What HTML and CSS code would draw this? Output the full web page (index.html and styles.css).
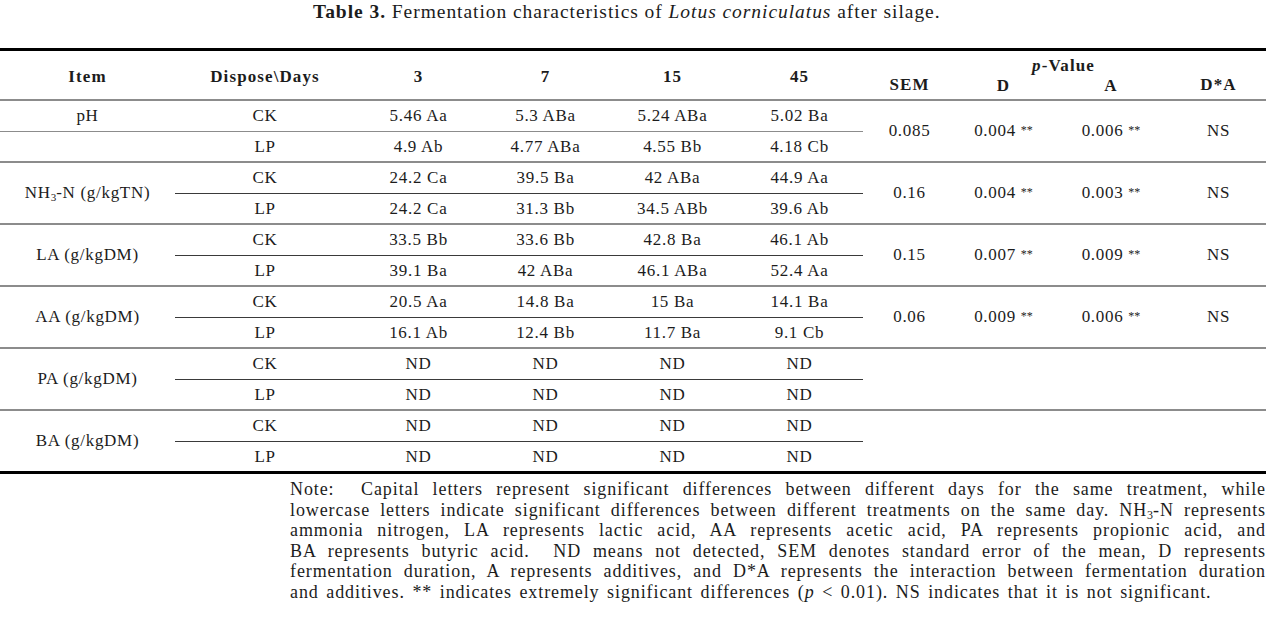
FILE: index.html
```html
<!DOCTYPE html>
<html lang="en">
<head>
<meta charset="utf-8">
<title>Table 3</title>
<link rel="stylesheet" href="styles.css">
</head>
<body>
<div class="title"><b>Table 3.</b> Fermentation characteristics of <i>Lotus corniculatus</i> after silage.</div>
<table class="data">
  <colgroup>
    <col class="c-item"><col class="c-disp"><col class="c-day"><col class="c-day"><col class="c-day"><col class="c-day">
    <col class="c-sem"><col class="c-d"><col class="c-a"><col class="c-da">
  </colgroup>
  <thead>
    <tr class="h1">
      <th rowspan="2" class="mid">Item</th>
      <th rowspan="2" class="mid">Dispose\Days</th>
      <th rowspan="2" class="mid">3</th>
      <th rowspan="2" class="mid">7</th>
      <th rowspan="2" class="mid">15</th>
      <th rowspan="2" class="mid">45</th>
      <th rowspan="2" class="low">SEM</th>
      <th colspan="2" class="pv"><i>p</i>-Value</th>
      <th rowspan="2" class="low">D*A</th>
    </tr>
    <tr class="h2">
      <th class="up">D</th>
      <th class="up">A</th>
    </tr>
  </thead>
  <tbody>
    <tr class="s1">
      <td class="m">pH</td><td class="m">CK</td><td class="m">5.46 Aa</td><td class="m">5.3 ABa</td><td class="m">5.24 ABa</td><td class="m">5.02 Ba</td>
      <td rowspan="2" class="g">0.085</td><td rowspan="2" class="g">0.004 <span class="st">**</span></td><td rowspan="2" class="g">0.006 <span class="st">**</span></td><td rowspan="2" class="g">NS</td>
    </tr>
    <tr class="s2">
      <td class="g"></td><td class="g">LP</td><td class="g">4.9 Ab</td><td class="g">4.77 ABa</td><td class="g">4.55 Bb</td><td class="g">4.18 Cb</td>
    </tr>

    <tr class="s1">
      <td rowspan="2" class="g">NH<sub>3</sub>-N (g/kgTN)</td><td class="d">CK</td><td class="d">24.2 Ca</td><td class="d">39.5 Ba</td><td class="d">42 ABa</td><td class="d">44.9 Aa</td>
      <td rowspan="2" class="g">0.16</td><td rowspan="2" class="g">0.004 <span class="st">**</span></td><td rowspan="2" class="g">0.003 <span class="st">**</span></td><td rowspan="2" class="g">NS</td>
    </tr>
    <tr class="s2">
      <td class="g">LP</td><td class="g">24.2 Ca</td><td class="g">31.3 Bb</td><td class="g">34.5 ABb</td><td class="g">39.6 Ab</td>
    </tr>

    <tr class="s1">
      <td rowspan="2" class="g">LA (g/kgDM)</td><td class="d">CK</td><td class="d">33.5 Bb</td><td class="d">33.6 Bb</td><td class="d">42.8 Ba</td><td class="d">46.1 Ab</td>
      <td rowspan="2" class="g">0.15</td><td rowspan="2" class="g">0.007 <span class="st">**</span></td><td rowspan="2" class="g">0.009 <span class="st">**</span></td><td rowspan="2" class="g">NS</td>
    </tr>
    <tr class="s2">
      <td class="g">LP</td><td class="g">39.1 Ba</td><td class="g">42 ABa</td><td class="g">46.1 ABa</td><td class="g">52.4 Aa</td>
    </tr>

    <tr class="s1">
      <td rowspan="2" class="g">AA (g/kgDM)</td><td class="d">CK</td><td class="d">20.5 Aa</td><td class="d">14.8 Ba</td><td class="d">15 Ba</td><td class="d">14.1 Ba</td>
      <td rowspan="2" class="g">0.06</td><td rowspan="2" class="g">0.009 <span class="st">**</span></td><td rowspan="2" class="g">0.006 <span class="st">**</span></td><td rowspan="2" class="g">NS</td>
    </tr>
    <tr class="s2">
      <td class="g">LP</td><td class="g">16.1 Ab</td><td class="g">12.4 Bb</td><td class="g">11.7 Ba</td><td class="g">9.1 Cb</td>
    </tr>

    <tr class="s1">
      <td rowspan="2" class="g">PA (g/kgDM)</td><td class="d">CK</td><td class="d">ND</td><td class="d">ND</td><td class="d">ND</td><td class="d">ND</td>
      <td rowspan="2" class="g"></td><td rowspan="2" class="g"></td><td rowspan="2" class="g"></td><td rowspan="2" class="g"></td>
    </tr>
    <tr class="s2">
      <td class="g">LP</td><td class="g">ND</td><td class="g">ND</td><td class="g">ND</td><td class="g">ND</td>
    </tr>

    <tr class="s1">
      <td rowspan="2" class="last">BA (g/kgDM)</td><td class="d">CK</td><td class="d">ND</td><td class="d">ND</td><td class="d">ND</td><td class="d">ND</td>
      <td rowspan="2" class="last"></td><td rowspan="2" class="last"></td><td rowspan="2" class="last"></td><td rowspan="2" class="last"></td>
    </tr>
    <tr class="s2">
      <td class="last">LP</td><td class="last">ND</td><td class="last">ND</td><td class="last">ND</td><td class="last">ND</td>
    </tr>
  </tbody>
</table>
<div class="note">
  <span class="ln">Note:&nbsp; Capital letters represent significant differences between different days for the same treatment, while</span>
  <span class="ln">lowercase letters indicate significant differences between different treatments on the same day. NH<sub>3</sub>-N represents</span>
  <span class="ln">ammonia nitrogen, LA represents lactic acid, AA represents acetic acid, PA represents propionic acid, and</span>
  <span class="ln">BA represents butyric acid.&nbsp; ND means not detected, SEM denotes standard error of the mean, D represents</span>
  <span class="ln">fermentation duration, A represents additives, and D*A represents the interaction between fermentation duration</span>
  <span class="ln end">and additives. ** indicates extremely significant differences (<i>p</i> &lt; 0.01). NS indicates that it is not significant.</span>
</div>
</body>
</html>
```

FILE: styles.css
```css
html, body {
  margin: 0;
  padding: 0;
  background: #ffffff;
}

body {
  font-family: "Liberation Serif", "Times New Roman", serif;
  color: #1c1c1c;
  width: 1280px;
}

.title {
  height: 48px;
  padding-left: 313px;
  font-size: 19.5px;
  line-height: 24px;
  letter-spacing: 0.95px;
}

.data {
  width: 1266px;
  table-layout: fixed;
  border-collapse: collapse;
  border-top: 3px solid #000;
  font-size: 17px;
  letter-spacing: 0.7px;
}

.c-item { width: 175px; }
.c-disp { width: 180px; }
.c-day { width: 127px; }
.c-sem { width: 93px; }
.c-d { width: 95px; }
.c-a { width: 120px; }
.c-da { width: 95px; }

.data th,
.data td {
  padding: 0;
  text-align: center;
  white-space: nowrap;
}

.data th {
  font-weight: bold;
  font-size: 17px;
  letter-spacing: 1.1px;
}

.h1 th {
  height: 24px;
  vertical-align: middle;
}

.h1 th.mid {
  padding-top: 4px;
}

.h2 th {
  height: 24px;
  border-bottom: 2px solid #8c8c8c;
}

.h1 th.pv {
  vertical-align: bottom;
  line-height: 18px;
}

.h1 th.low {
  vertical-align: bottom;
  padding-bottom: 4px;
}

.h1 th[rowspan] {
  border-bottom: 2px solid #8c8c8c;
}

.h2 th.up {
  vertical-align: top;
  line-height: 22px;
}

.s1 td {
  height: 30px;
}

.s2 td {
  height: 29px;
}

.data td.m {
  border-bottom: 1px solid #8c8c8c;
}

.data td.d {
  border-bottom: 1px solid #3a3a3a;
}

.data td.g {
  border-bottom: 2px solid #8c8c8c;
}

.data td.last {
  border-bottom: 3px solid #000;
}

.data sub {
  font-size: 11px;
  vertical-align: -3px;
  line-height: 0;
  letter-spacing: 0;
}

.st {
  font-size: 12px;
  vertical-align: 2px;
  letter-spacing: 0;
}

.note {
  margin-left: 290px;
  width: 976px;
  margin-top: 5px;
  font-size: 18px;
  line-height: 20.6px;
  letter-spacing: 0.9px;
  word-spacing: 2.2px;
}

.note .ln {
  display: block;
  text-align: justify;
  text-align-last: justify;
  white-space: nowrap;
}

.note .ln.end {
  text-align-last: left;
}

.note sub {
  font-size: 12px;
  vertical-align: -3px;
  line-height: 0;
  letter-spacing: 0;
}
```
